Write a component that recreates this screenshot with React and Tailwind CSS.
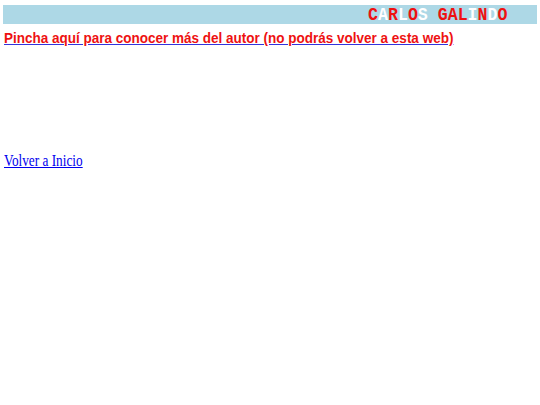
import React from 'react';

const letters = [
  ['C', 'red'], ['A', 'white'], ['R', 'red'], ['L', 'white'], ['O', 'red'], ['S', 'white'],
  [' ', 'white'],
  ['G', 'red'], ['A', 'red'], ['L', 'red'], ['I', 'white'], ['N', 'red'], ['D', 'white'], ['O', 'red'],
];

const App = () => {
  return (
    <div className="w-[540px] bg-white px-[3px] pt-[5px]" style={{ fontFamily: '"Liberation Serif", serif' }}>
      <div className="w-[534px] h-[19px] bg-[#add8e6] flex items-center justify-end pr-[30px]">
        <span className="inline-block origin-right scale-x-[0.92] text-[18px] font-bold leading-none whitespace-pre" style={{ fontFamily: '"Liberation Mono", monospace' }}>
          {letters.map(([ch, col], i) => (
            <span key={i} className={col === 'red' ? 'text-[#ee1111]' : 'text-white'}>{ch}</span>
          ))}
        </span>
      </div>
      <div className="mt-[5px] pl-px leading-[18px]">
        <a href="#" className="inline-block origin-left scale-x-[0.9] underline decoration-[#3333dd] text-[#ee1111] font-bold text-[15px] whitespace-nowrap" style={{ fontFamily: '"Liberation Sans", sans-serif' }}>
          Pincha aquí para conocer más del autor (no podrás volver a esta web)
        </a>
      </div>
      <div className="mt-[105px] pl-px leading-[18px]">
        <a href="#" className="inline-block origin-left scale-x-[0.83] underline text-[#0000ee] text-[16px] whitespace-nowrap">Volver a Inicio</a>
      </div>
    </div>
  );
};

export default App;
